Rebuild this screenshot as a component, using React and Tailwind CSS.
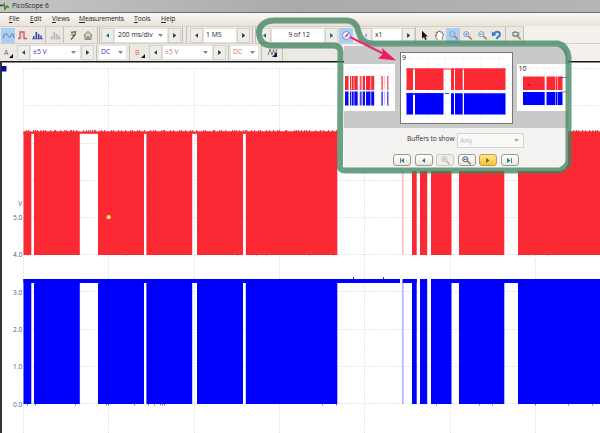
import { clsx } from 'clsx';

/* =========================
   Waveform Data
========================= */
const VERTICAL_GRID = [23.5, 108.5, 194.5, 279.5, 364.5, 450.5, 535.5];
const HORIZONTAL_GRID = [68.5, 105.5, 143.5, 180.5, 217.5, 254.5, 291.5, 329.5, 366.5, 403.5];

const AXIS_LABELS = [
  { text: 'V', y: 206 },
  { text: '5.0', y: 220 },
  { text: '4.0', y: 257 },
  { text: '3.0', y: 294.5 },
  { text: '2.0', y: 332 },
  { text: '1.0', y: 369 },
  { text: '0.0', y: 406.5 },
];

// [start, end] of every burst on both channels
const BURSTS = [
  [23.5, 31.3], [34, 79.8], [98, 144], [146.4, 192.2], [197, 243], [245.8, 337.3],
  [412, 416.7], [420, 427.2], [431, 451.5], [459, 504.3], [518, 600],
];

const RED_NOISE = [
  26, 28, 33, 35, 37, 40, 43, 45, 50, 54, 55, 60, 64, 66, 70, 71, 73, 76, 83, 86, 88, 90, 92, 94, 95,
  101, 104, 111, 113, 118, 121, 125, 130, 132, 137, 139, 144, 150, 153, 155, 161, 163, 164, 170, 173,
  179, 181, 185, 190, 192, 196, 203, 205, 213, 214, 219, 221, 225, 232, 234, 236, 239, 243, 245, 246,
  251, 254, 258, 260, 266, 269, 273, 277, 279, 285, 286, 294, 296, 298, 301, 304, 306, 309, 315, 320,
  323, 328, 332, 336, 573, 576, 578, 582, 585, 589, 592, 595, 597,
];

const BLUE_NOISE = [27, 35, 75, 106, 108, 134, 148, 154, 160, 162, 164, 322, 336, 436, 479, 492, 535, 568, 592];
const RED_DRIPS = [28, 126, 237, 256, 266, 309, 333, 426, 529, 548];

/* =========================
   Small Icons
========================= */
const Triangle = ({ left, className = 'fill-[#22494a]' }) => (
  <svg className={clsx('h-[5px] w-[3.5px] shrink-0', className)} viewBox="0 0 4 6">
    <path d={left ? 'M4 0V6L0 3Z' : 'M0 0V6L4 3Z'} />
  </svg>
);

const Chevron = ({ className = 'fill-[#858585]' }) => (
  <svg className={clsx('h-[3px] w-[5px] shrink-0', className)} viewBox="0 0 5 3">
    <path d="M0 0H5L2.5 3Z" />
  </svg>
);

const Magnifier = ({ sign, color = '#7592bd', handle = '#a18468' }) => (
  <svg className="size-[11px]" viewBox="0 0 11 11" fill="none">
    <path d="M6.400 6.200L9.700 9.300" stroke={handle} strokeWidth="1.700" />
    <circle cx="4.300" cy="4.200" r="2.600" fill="#e4eef9" stroke={color} strokeWidth=".9" />
    {sign === 'plus' && <path d="M2.900 4.200H5.700M4.300 2.800V5.600" stroke={color} strokeWidth=".9" />}
    {sign === 'minus' && <path d="M2.800 4.200H5.800" stroke={color} strokeWidth="1" />}
    {sign === 'window' && <path d="M3.200 3.200H5.400V5.200H3.200Z" stroke={color} strokeWidth=".6" />}
    {sign === 'full' && <path d="M1 2.500H8V5.500H1M3 3V5M6.500 3V5" stroke={color} strokeWidth=".7" />}
  </svg>
);

const ScopeIcon = () => (
  <svg className="h-[11px] w-[13px]" viewBox="0 0 13 11" fill="none">
    <path d="M1 8.500C2 4 4 2 5.500 4.500S8 8.500 9 5.500S11 3 12 8" stroke="#66809f" strokeWidth="1" />
    <path d="M1 6C3 2 4 4 6 6.500S9 6 12 3.500" stroke="#849fc0" strokeWidth=".8" />
  </svg>
);

const PersistIcon = () => (
  <svg className="h-[11px] w-[11px]" viewBox="0 0 11 11" fill="none">
    <path d="M1 8.500H3V2H7V8.500H10" stroke="#d85261" strokeWidth="1.300" />
    <path d="M5 3V8" stroke="#e3a1a5" strokeWidth=".8" />
  </svg>
);

const SpectrumIcon = ({ color }) => (
  <svg className="h-[11px] w-[11px]" viewBox="0 0 11 11">
    <path fill={color} d="M1 6H2.500V9H1ZM3.500 2H5.200V9H3.500ZM6 4H7.500V9H6ZM8.300 5.500H9.800V9H8.300ZM0 8.400H11V9.200H0Z" />
  </svg>
);

const WizardIcon = () => (
  <svg className="h-[11px] w-[10px]" viewBox="0 0 10 11" fill="none">
    <path d="M3 2.500L7.500 1.700L7 5L3 9.500M4 5.500L6.800 4.700" stroke="#65604a" strokeWidth="1.300" />
    <path d="M2 6L6 2" stroke="#b9a654" />
  </svg>
);

const HomeIcon = () => (
  <svg className="h-[11px] w-[10px]" viewBox="0 0 10 11" fill="none">
    <path d="M.7 5.500L5 1.500L9.300 5.500M2 5V9.300H8V5M4.200 9V6.500H5.800V9" fill="#ddd8bf" stroke="#6b6656" strokeWidth=".9" />
  </svg>
);

const CompassIcon = () => (
  <svg className="size-[11px]" viewBox="0 0 11 11" fill="none">
    <circle cx="5.5" cy="5.5" r="4" fill="#f5f3ff" stroke="#8586c6" strokeWidth="1" />
    <path d="M3.200 7.800L5 4.900L8.500 2L6.200 6.300Z" fill="#a73b99" />
  </svg>
);

const PointerIcon = () => (
  <svg className="h-[11px] w-[9px]" viewBox="0 0 9 11">
    <path d="M2 .8V8.700L4 7L5.300 10L6.700 9.300L5.400 6.500H7.900Z" fill="#111" />
  </svg>
);

const HandIcon = () => (
  <svg className="h-[11px] w-[11px]" viewBox="0 0 11 11">
    <path d="M3.400 9.800L1.200 6.200C.9 5 2 5 2.800 6L2 3C2.200 2 3 2.300 3.400 3.200L3.700 1.600C4.200.8 5 1 5.100 2L5.700 1.200C6.500.8 6.900 1.400 6.800 2.400L7.600 2C8.500 2.100 8.400 3 8.300 3.800L9 3.600C9.800 4 9.300 6 8.200 7.800V9.800" fill="#fff" stroke="#333" strokeWidth=".8" strokeDasharray="1.5 .4" />
  </svg>
);

const UndoIcon = () => (
  <svg className="h-[11px] w-[11px]" viewBox="0 0 11 11" fill="none">
    <path d="M3 3.500C6.500-.1 10.500 2.800 8.300 5.800C7.500 7 6.500 7 5.500 9" stroke="#3979c4" strokeWidth="2" />
    <path d="M.8 1.500L1 6.300L5.700 5Z" fill="#3979c4" />
  </svg>
);

/* =========================
   Toolbar Controls
========================= */
const StepButton = ({ left, className, iconClass }) => (
  <div className={clsx('flex h-[15px] w-[13px] shrink-0 items-center justify-center border border-[#d5d0c9] bg-[#efede9]', className)}>
    <Triangle left={left} className={iconClass} />
  </div>
);

const Field = ({ children, className, chevron, chevronClass }) => (
  <div className={clsx('flex h-[15px] shrink-0 items-center border border-[#e6e2dc] bg-white pl-[2px] text-[6.8px]', className)}>
    <span className="grow whitespace-nowrap">{children}</span>
    {chevron && <Chevron className={chevronClass} />}
  </div>
);

const ToolIcon = ({ active, className, children }) => (
  <div className={clsx('flex h-[15px] shrink-0 items-center justify-center', active && 'bg-[#a9cff4]', className)}>
    {children}
  </div>
);

const Separator = ({ className }) => <div className={clsx('h-[16px] w-px shrink-0 bg-[#c5bfb5]', className)} />;

const ChannelLabel = ({ name, className }) => (
  <div className={clsx('flex h-[15px] w-[14px] shrink-0 items-center pl-[2px] text-[7px]', className)}>
    <span>{name}</span>
    <svg className="mt-[6px] ml-[1px] size-[4px]" viewBox="0 0 4 4"><path d="M4 0V4H0Z" fill="#111" /></svg>
  </div>
);

const MenuItem = ({ hotkey, rest, className }) => (
  <span className={clsx('shrink-0', className)}>
    <span className="underline underline-offset-1">{hotkey}</span>{rest}
  </span>
);

const MainToolbar = () => (
  <div className="flex h-[17px] items-center bg-[#f4f0eb]">
    <div className="flex h-[17px] w-[524px] shrink-0 items-center border-t border-[#d5cfc6] bg-[#ece8e1]">
      <ToolIcon active className="ml-[1px] w-[14px]"><ScopeIcon /></ToolIcon>
      <ToolIcon className="w-[14px]"><PersistIcon /></ToolIcon>
      <ToolIcon className="ml-px w-[14px]"><SpectrumIcon color="#3846bb" /></ToolIcon>
      <Separator className="ml-px" />
      <ToolIcon className="ml-[2px] w-[14px]"><SpectrumIcon color="#b7b6b9" /></ToolIcon>
      <Separator className="ml-px" />
      <ToolIcon className="ml-[2px] w-[14px]"><WizardIcon /></ToolIcon>
      <ToolIcon className="ml-px w-[14px]"><HomeIcon /></ToolIcon>
      <Separator className="ml-[2px]" />
      <Separator className="ml-px" />
      <StepButton left className="ml-px" iconClass="fill-[#176c9b]" />
      <Field chevron className="w-[54px] pr-[4px] pl-[3px]">200 ms/div</Field>
      <StepButton />
      <Separator className="ml-px" />
      <Separator className="ml-[3px]" />
      <StepButton left className="ml-[3px]" />
      <Field className="w-[34px]">1 MS</Field>
      <StepButton />
      <Separator className="ml-[2px]" />
      <Separator className="ml-[2px]" />
      <StepButton left className="ml-[2px]" iconClass="fill-[#17687a]" />
      <Field className="w-[54px] text-center">9 of 12</Field>
      <StepButton iconClass="fill-[#176c9b]" />
      <ToolIcon active className="ml-px w-[14px]"><CompassIcon /></ToolIcon>
      <StepButton left className="ml-[6px]" iconClass="fill-[#8fb4cd]" />
      <Field className="w-[30px]">x1</Field>
      <StepButton />
      <Separator />
      <ToolIcon className="ml-px w-[14px]"><PointerIcon /></ToolIcon>
      <ToolIcon className="ml-px w-[14px]"><HandIcon /></ToolIcon>
      <ToolIcon active className="w-[14px]"><Magnifier sign="window" /></ToolIcon>
      <ToolIcon className="w-[15px]"><Magnifier sign="plus" /></ToolIcon>
      <ToolIcon className="w-[14px]"><Magnifier sign="minus" /></ToolIcon>
      <ToolIcon className="w-[15px]"><UndoIcon /></ToolIcon>
      <Separator className="ml-px" />
      <ToolIcon className="ml-[3px] w-[14px]"><Magnifier sign="full" color="#777b84" /></ToolIcon>
      <Separator className="ml-auto" />
    </div>
  </div>
);

const ChannelToolbar = () => (
  <div className="flex h-[17px] items-center bg-[#f4f1ed]">
    <div className="flex h-[17px] w-[342px] shrink-0 items-center bg-[#ece8e2]">
      <ChannelLabel name="A" className="ml-[2px] text-[#626474]" />
      <StepButton left className="ml-px" />
      <Field chevron className="w-[51px] pr-[4px] text-[#3730c5]">±5 V</Field>
      <StepButton />
      <Separator className="ml-[2px]" />
      <Field chevron className="ml-px w-[29px] pr-[3px] text-[#3730c5]">DC</Field>
      <Separator className="ml-[2px]" />
      <ChannelLabel name="B" className="ml-[3px] text-[#df6966]" />
      <StepButton left className="ml-[2px]" />
      <Field chevron className="w-[51px] pr-[4px] text-[#d8706f]">±5 V</Field>
      <StepButton />
      <Separator className="ml-[2px]" />
      <Field chevron className="ml-px w-[29px] pr-[3px] text-[#d8706f]">DC</Field>
      <Separator className="ml-[2px]" />
      <ToolIcon className="ml-[4px] w-[14px]">
        <svg className="h-[11px] w-[12px]" viewBox="0 0 12 11" fill="none">
          <path d="M1 8L3 2L5 8L7 2M6 3L8 7L10 2" stroke="#6b7380" strokeWidth=".9" />
          <path d="M10 5V10H5Z" fill="#11164f" />
        </svg>
      </ToolIcon>
      <Separator className="ml-[2px]" />
    </div>
  </div>
);

/* =========================
   Scope Plot
========================= */
const ScopePlot = () => (
  <svg className="block h-[372px] w-[600px]" viewBox="0 61 600 372">
    <rect x="0" y="61" width="600" height="372" fill="#fff" />
    <rect x="0" y="61" width="2" height="372" fill="#333" />
    <rect x="2" y="61" width="598" height="1.500" fill="#171717" />

    {/* Grid */}
    <g stroke="#d9e5e6" strokeWidth=".8" strokeDasharray="2 1">
      {VERTICAL_GRID.map(x => <path key={x} d={`M${x} 68V433`} />)}
      {HORIZONTAL_GRID.map(y => <path key={y} d={`M23 ${y}H600`} />)}
    </g>

    {/* Channel B */}
    <g fill="#fb2934">
      <rect x="23.500" y="131.500" width="313.800" height="2.300" />
      <rect x="402.500" y="131.500" width="197.500" height="2.300" />
      <rect x="402.500" y="131.500" width=".8" height="123.500" opacity=".6" />
      {BURSTS.map(([from, to]) => (
        <rect key={from} x={from} y="131.500" width={to - from} height="123.500" />
      ))}
      {RED_NOISE.map(x => <rect key={x} x={x} y="130" width="1.200" height="2" fill="#d82a38" opacity=".8" />)}
      {RED_DRIPS.map(x => <rect key={x} x={x} y="255" width=".6" height="1.500" opacity=".6" />)}
    </g>

    {/* Channel A */}
    <g fill="#0000ff">
      <rect x="23.500" y="279" width="376.500" height="4" />
      <rect x="402.700" y="279" width="14" height="4" />
      <rect x="431" y="279" width="169" height="4" />
      <rect x="402.500" y="279" width=".8" height="125" opacity=".6" />
      {BURSTS.map(([from, to]) => (
        <rect key={from} x={from} y="279" width={to - from} height="125" />
      ))}
      {BLUE_NOISE.map(x => <rect key={x} x={x} y="404" width=".8" height="1.500" opacity=".7" />)}
      <rect x="353" y="277" width=".8" height="2" />
      <rect x="383" y="277" width=".8" height="2" />
    </g>

    {/* Trigger and axis handle */}
    <circle cx="108.700" cy="217.200" r="2.100" fill="#ffe85b" />
    <rect x="1.500" y="66" width="5" height="5.500" fill="#0a0aa8" />
    <g fill="#5155ad" fontSize="6.600" textAnchor="end" fontFamily="Open Sans, Noto Sans, sans-serif">
      {AXIS_LABELS.map(label => <text key={label.text} x="22.300" y={label.y}>{label.text}</text>)}
    </g>
  </svg>
);

/* =========================
   Buffer Navigator
========================= */
const ThumbGrid = ({ width, height }) => (
  <g stroke="#dbe4e7" strokeWidth=".6" strokeDasharray="1.500 1">
    {[0.08, 0.24, 0.4, 0.56, 0.72, 0.88].map(f => (
      <path key={f} d={`M${width * f} 4V${height - 4}M4 ${height * f}H${width - 4}`} />
    ))}
  </g>
);

const PreviousThumb = () => (
  <svg className="mt-[18px] h-[47px] w-[51px] shrink-0 bg-white" viewBox="344 64 51 47">
    <g transform="translate(344 64)"><ThumbGrid width={51} height={47} /></g>
    {['#f52936', '#0909f2'].map((color, i) => (
      <g key={color} fill={color} transform={`translate(0 ${i * 15.5})`}>
        {[[345, 3.5], [350, 1], [351.7, 2], [354.3, 3.4], [359.8, 1], [361.5, .8], [363, 2], [366, 4.5], [371.2, 3], [381.5, 1.2], [387.3, 1]].map(([x, width]) => (
          <rect key={x} x={x} y="76" width={width} height="14" />
        ))}
        <rect x="384" y="76" width=".5" height="13" opacity=".5" />
      </g>
    ))}
  </svg>
);

const CurrentThumb = () => (
  <svg className="mt-[6px] ml-[5px] h-[72px] w-[113px] shrink-0 border border-[#777] bg-white" viewBox="401 53 111 70">
    <g transform="translate(401 53)"><ThumbGrid width={111} height={70} /></g>
    <g fill="#fb2934">
      <rect x="406.500" y="68.500" width="99" height="1" />
      <path d="M406.500 68.500H413V90H406.500ZM415 68.500H443.500V90H415ZM451 68.500H454V90H451ZM455 68.500H462.700V90H455ZM464 68.500H505.500V90H464Z" />
    </g>
    <g fill="#0000ff">
      <rect x="406.500" y="93.300" width="37" height="1.500" />
      <path d="M406.500 93.300H413V114.500H406.500ZM415 93.300H443.500V114.500H415ZM451 93.300H454V114.500H451ZM455 93.300H462.700V114.500H455ZM464 93.300H505.500V114.500H464ZM445 93.300H449V93.900H445Z" />
    </g>
    <path d="M416 82L417 83L416 84L415 83Z" fill="#a54b24" />
    <text x="402" y="59.500" fontSize="7" fill="#222" fontFamily="Open Sans, Noto Sans, sans-serif">9</text>
  </svg>
);

const NextThumb = () => (
  <svg className="mt-[18px] ml-[4px] h-[47px] w-[51px] shrink-0 bg-white" viewBox="517 64 51 47">
    <g transform="translate(517 64)"><ThumbGrid width={51} height={47} /></g>
    <path fill="#fb2934" d="M523 76.500H544.700V90H523ZM546.500 76.500H555.500V90H546.500ZM556 76.500H557V90H556ZM557.500 76.500H562.500V90H557.500Z" />
    <path fill="#0000ff" d="M523 92H544.700V105H523ZM546.500 92H555.500V105H546.500ZM556 92H557V105H556ZM557.500 92H562.500V105H557.500Z" />
    <path d="M529.500 83.800L530.500 84.800L529.500 85.800L528.500 84.800Z" fill="#26301a" />
    <path d="M560 77.500H567M560 92H567" stroke="#334" strokeWidth=".6" />
    <text x="518.500" y="71" fontSize="7" fill="#222" fontFamily="Open Sans, Noto Sans, sans-serif">10</text>
  </svg>
);

const NavButton = ({ active, disabled, children }) => (
  <div
    className={clsx(
      'flex h-[12px] w-[18px] shrink-0 items-center justify-center rounded-[3px] border',
      active && 'border-[#b6a165] bg-linear-to-b from-[#ffe982] to-[#ffbe29]',
      disabled && 'border-[#ccc8bd] bg-[#f1efe8]',
      !active && !disabled && 'border-[#9b998e] bg-linear-to-b from-white to-[#e9e8df]'
    )}
  >
    {children}
  </div>
);

const Bar = () => <div className="h-[5px] w-px bg-[#4c8c90]" />;

const BufferNavigator = () => (
  <div className="absolute top-[46px] left-[344px] flex h-[125px] w-[224px] flex-col overflow-hidden rounded-r-[9px] bg-[#f5f3f1]">
    <div className="flex h-[82px] items-start overflow-hidden bg-[#c9c9c9]">
      <PreviousThumb />
      <CurrentThumb />
      <NextThumb />
    </div>
    <div className="mt-[5px] flex h-[15px] items-center pl-[63px]">
      <span className="w-[50px] pb-[2px] text-[6.7px] tracking-[-0.1px] whitespace-nowrap text-[#333]">Buffers to show</span>
      <div className="flex h-[15px] w-[67px] items-center justify-between border border-[#d6d3ce] bg-[#faf9f7] pr-[4px] pl-[2px] text-[7px] text-[#bbb]">
        <span>Any</span>
        <Chevron className="fill-[#aaa]" />
      </div>
    </div>
    <div className="mt-[6px] flex gap-[3.5px] pl-[49px]">
      <NavButton><Bar /><Triangle left className="fill-[#287277]" /></NavButton>
      <NavButton><Triangle left className="fill-[#287277]" /></NavButton>
      <NavButton disabled><Magnifier sign="plus" color="#b9b9b9" handle="#bdbab4" /></NavButton>
      <NavButton><Magnifier sign="minus" color="#35547b" /></NavButton>
      <NavButton active><Triangle className="fill-[#4b714e]" /></NavButton>
      <NavButton><Triangle className="fill-[#287277]" /><Bar /></NavButton>
    </div>
  </div>
);

// Hand drawn highlight around the navigator and its toolbar control
const Annotation = () => (
  <svg className="pointer-events-none absolute top-0 left-0 h-[433px] w-[600px]" viewBox="0 0 600 433" fill="none">
    <path
      d="M340.500 51Q340 45.500 333 45.500H270Q262 45 260 38Q257 29 263 24Q267 20.500 275 20.500H346Q354 20.500 357 27Q359 34 361 38Q365 43.500 373 43.500H558Q567 46 568.500 57V160Q569 166 560 170.500H346Q339 171 340 165L340.500 51"
      stroke="#3e8460"
      strokeOpacity=".76"
      strokeWidth="6"
      strokeLinejoin="round"
    />
    <path d="M350 37L384 54" stroke="#e92b72" strokeWidth="2" />
    <path d="M396 60.500L378 58.500L383 54L382 48Z" fill="#f1186b" />
  </svg>
);

const App = () => {
  return (
    <div className="relative h-[433px] w-[600px] overflow-hidden bg-white font-['Open_Sans','Noto_Sans',sans-serif] leading-none text-[#272727]">
      {/* Title bar */}
      <div className="flex h-[12px] items-center bg-linear-to-r from-[#c5c5c5] via-[#aaa] to-[#b5b5b5]">
        <svg className="h-[12px] w-[12px]" viewBox="0 0 12 12" fill="none">
          <path d="M2 6L4 4L5 9L7 6L9 8" stroke="#4d842b" strokeWidth="1.500" />
          <path d="M0 5L2 6" stroke="#333" strokeWidth="1.500" />
        </svg>
        <span className="text-[6.7px] tracking-[-0.05px]">PicoScope 6</span>
      </div>

      {/* Menu */}
      <div className="flex h-[14px] items-center border-t border-[#706b66] bg-linear-to-b from-[#faf8f5] to-[#e9e2d9] text-[6.8px] tracking-[-0.1px]">
        <MenuItem hotkey="F" rest="ile" className="ml-[9px] w-[21px]" />
        <MenuItem hotkey="E" rest="dit" className="w-[22px]" />
        <MenuItem hotkey="V" rest="iews" className="w-[27px]" />
        <MenuItem hotkey="M" rest="easurements" className="w-[55px] tracking-[-0.25px]" />
        <MenuItem hotkey="T" rest="ools" className="w-[27px]" />
        <MenuItem hotkey="H" rest="elp" />
      </div>

      <MainToolbar />
      <div className="h-px bg-[#d5d0c9]" />
      <ChannelToolbar />
      <ScopePlot />
      <BufferNavigator />
      <Annotation />
    </div>
  );
};

export default App;
